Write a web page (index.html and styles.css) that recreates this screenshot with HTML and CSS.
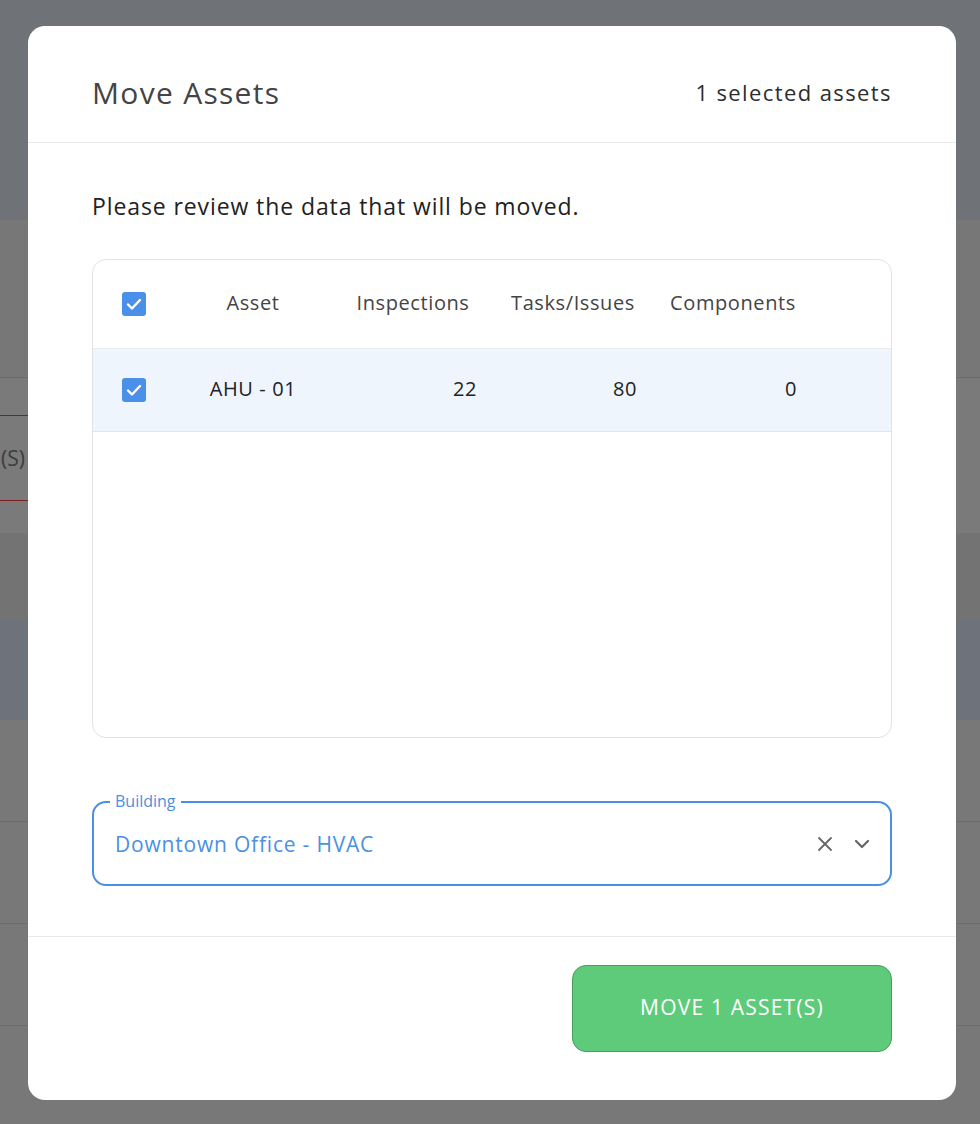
FILE: index.html
```html
<!DOCTYPE html>
<html lang="en">
<head>
<meta charset="utf-8">
<title>Move Assets</title>
<link rel="stylesheet" href="styles.css">
</head>
<body>
<div class="backdrop">
  <div class="bg-top"></div>
  <div class="bg-band"></div>
  <div class="bg-rows">
    <div class="bg-redbox"><span>(S)</span></div>
  </div>
  <div class="bg-dark"></div>
  <div class="bg-blue"></div>
  <div class="bg-row"></div>
  <div class="bg-row"></div>
  <div class="bg-row"></div>
  <div class="bg-row last"></div>
</div>

<div class="modal">
  <div class="modal-header">
    <h1 class="modal-title">Move Assets</h1>
    <div class="modal-count">1 selected assets</div>
  </div>
  <div class="modal-body">
    <p class="intro">Please review the data that will be moved.</p>
    <div class="table-box">
      <div class="trow thead">
        <div class="cell cb"><span class="checkbox"><svg viewBox="0 0 24 24" width="24" height="24"><path d="M6 12.5l4 4 8-8.5" fill="none" stroke="#fff" stroke-width="2.4" stroke-linecap="round" stroke-linejoin="round"/></svg></span></div>
        <div class="cell col">Asset</div>
        <div class="cell col">Inspections</div>
        <div class="cell col">Tasks/Issues</div>
        <div class="cell col">Components</div>
      </div>
      <div class="trow tdata">
        <div class="cell cb"><span class="checkbox"><svg viewBox="0 0 24 24" width="24" height="24"><path d="M6 12.5l4 4 8-8.5" fill="none" stroke="#fff" stroke-width="2.4" stroke-linecap="round" stroke-linejoin="round"/></svg></span></div>
        <div class="cell col name">AHU - 01</div>
        <div class="cell col num">22</div>
        <div class="cell col num">80</div>
        <div class="cell col num">0</div>
      </div>
    </div>
    <div class="select">
      <span class="select-label">Building</span>
      <span class="select-value">Downtown Office - HVAC</span>
      <span class="select-icons">
        <svg class="ico-x" viewBox="0 0 16 16" width="16" height="16"><path d="M2 2l12 12M14 2L2 14" stroke="#666" stroke-width="1.8" stroke-linecap="round"/></svg>
        <svg class="ico-chev" viewBox="0 0 16 10" width="16" height="10"><path d="M2 2l6 6 6-6" fill="none" stroke="#666" stroke-width="2.2" stroke-linecap="round" stroke-linejoin="round"/></svg>
      </span>
    </div>
  </div>
  <div class="modal-footer">
    <button class="btn-move">MOVE 1 ASSET(S)</button>
  </div>
</div>
</body>
</html>
```
FILE: styles.css
```css
* { box-sizing: border-box; }
html, body { margin: 0; padding: 0; }
body {
  width: 980px;
  height: 1124px;
  overflow: hidden;
  background: #787878;
  font-family: "Open Sans", "Noto Sans", sans-serif;
}

/* dimmed page behind the dialog */
.backdrop { display: flex; flex-direction: column; height: 1124px; }
.bg-top { height: 220px; background: #6f7378; }
.bg-band { height: 158px; background: #777777; border-bottom: 1px solid #6a6a6a; }
.bg-rows { height: 155px; background: #7a7a7a; padding-top: 37px; }
.bg-redbox {
  width: 28px;
  height: 86px;
  border-top: 1px solid #7e2020;
  border-bottom: 1px solid #7e2020;
  display: flex;
  align-items: center;
  padding-left: 1px;
  font-size: 21px;
  color: #3c3c3c;
}
.bg-dark { height: 87px; background: #737373; }
.bg-blue { height: 100px; background: #6e737b; }
.bg-row { height: 102px; background: #787878; border-bottom: 1px solid #6c6c6c; }
.bg-row.last { border-bottom: 0; flex: 1; }

/* dialog */
.modal {
  position: absolute;
  left: 28px;
  top: 26px;
  width: 928px;
  height: 1074px;
  background: #fff;
  border-radius: 17px;
  display: flex;
  flex-direction: column;
}
.modal-header {
  display: flex;
  justify-content: space-between;
  align-items: center;
  padding: 50px 64px 33px;
  border-bottom: 1px solid #e9e9e9;
}
.modal-title {
  margin: 0;
  font-size: 30px;
  line-height: 33px;
  font-weight: 400;
  letter-spacing: 1.3px;
  color: #444;
}
.modal-count {
  font-size: 22px;
  line-height: 33px;
  letter-spacing: 1.4px;
  color: #2d2d2d;
}
.modal-body {
  padding: 47px 64px 0;
  height: 794px;
  border-bottom: 1px solid #e9e9e9;
}
.intro {
  margin: 0;
  font-size: 23px;
  line-height: 32px;
  letter-spacing: 0.9px;
  color: #222;
}
.table-box {
  margin-top: 37px;
  height: 479px;
  border: 1px solid #e3e3e3;
  border-radius: 14px;
  overflow: hidden;
}
.trow { display: flex; align-items: center; }
.thead { height: 89px; border-bottom: 1px solid #ececec; }
.tdata { height: 83px; background: #eff5fd; border-bottom: 1px solid #e1e6ec; }
.cell.cb { width: 80px; display: flex; justify-content: center; padding-left: 1px; }
.cell.col { width: 160px; text-align: center; font-size: 20px; letter-spacing: 0.6px; padding-bottom: 4px; }
.thead .cell.col { color: #444; }
.tdata .cell.col { color: #222; }
.tdata .cell.num { text-align: right; padding-right: 16px; }
.checkbox {
  width: 24px;
  height: 24px;
  border-radius: 3px;
  background: #4a90e8;
  display: block;
}
.checkbox svg { display: block; }

.select {
  position: relative;
  margin-top: 63px;
  height: 85px;
  border: 2.5px solid #4a90e2;
  border-radius: 14px;
  display: flex;
  align-items: center;
  padding: 0 20px 0 21px;
}
.select-label {
  position: absolute;
  top: -12px;
  left: 16px;
  padding: 0 5px;
  background: #fff;
  font-size: 16px;
  line-height: 20px;
  color: #4a90e2;
}
.select-value {
  flex: 1;
  font-size: 21px;
  letter-spacing: 0.8px;
  color: #4a90e2;
}
.select-icons { display: flex; align-items: center; gap: 21px; }
.select-icons svg { display: block; }

.modal-footer {
  flex: 1;
  display: flex;
  justify-content: flex-end;
  align-items: flex-start;
  padding: 28px 64px 0;
}
.btn-move {
  width: 320px;
  height: 87px;
  padding: 0 0 3px;
  background: #5ecb7a;
  border: 1px solid #4a9d5c;
  border-radius: 14px;
  color: #fff;
  font-family: inherit;
  font-size: 21px;
  letter-spacing: 1.2px;
}
```
